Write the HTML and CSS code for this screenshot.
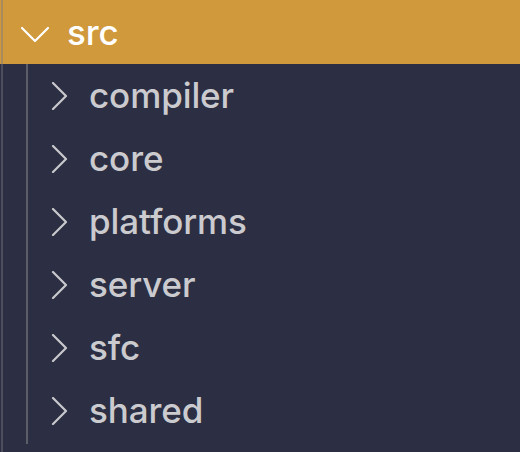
FILE: index.html
```html
<!DOCTYPE html>
<html>
<head>
<meta charset="utf-8">
<link rel="stylesheet" href="styles.css">
</head>
<body>
<div class="tree">
  <div class="folder open">
    <svg class="chev-down" width="30" height="28" viewBox="0 0 30 28"><path d="M2 10 L15 23 L28 10" fill="none" stroke="#ffffff" stroke-width="2.2" stroke-linecap="round" stroke-linejoin="round"/></svg>
    <span class="name">src</span>
  </div>
  <div class="children">
    <div class="folder"><svg class="chev-right" width="20" height="28" viewBox="0 0 20 28"><path d="M2 1 L15 14 L2 27" fill="none" stroke="#c9c9cd" stroke-width="2.2" stroke-linecap="round" stroke-linejoin="round"/></svg><span class="name">compiler</span></div>
    <div class="folder"><svg class="chev-right" width="20" height="28" viewBox="0 0 20 28"><path d="M2 1 L15 14 L2 27" fill="none" stroke="#c9c9cd" stroke-width="2.2" stroke-linecap="round" stroke-linejoin="round"/></svg><span class="name">core</span></div>
    <div class="folder"><svg class="chev-right" width="20" height="28" viewBox="0 0 20 28"><path d="M2 1 L15 14 L2 27" fill="none" stroke="#c9c9cd" stroke-width="2.2" stroke-linecap="round" stroke-linejoin="round"/></svg><span class="name">platforms</span></div>
    <div class="folder"><svg class="chev-right" width="20" height="28" viewBox="0 0 20 28"><path d="M2 1 L15 14 L2 27" fill="none" stroke="#c9c9cd" stroke-width="2.2" stroke-linecap="round" stroke-linejoin="round"/></svg><span class="name">server</span></div>
    <div class="folder"><svg class="chev-right" width="20" height="28" viewBox="0 0 20 28"><path d="M2 1 L15 14 L2 27" fill="none" stroke="#c9c9cd" stroke-width="2.2" stroke-linecap="round" stroke-linejoin="round"/></svg><span class="name">sfc</span></div>
    <div class="folder"><svg class="chev-right" width="20" height="28" viewBox="0 0 20 28"><path d="M2 1 L15 14 L2 27" fill="none" stroke="#c9c9cd" stroke-width="2.2" stroke-linecap="round" stroke-linejoin="round"/></svg><span class="name">shared</span></div>
  </div>
</div>
</body>
</html>
```
FILE: styles.css
```css
html, body {
  margin: 0;
  padding: 0;
  background: #2c2f43;
}
body {
  width: 520px;
  height: 452px;
  overflow: hidden;
  font-family: Inter, "Liberation Sans", sans-serif;
}
.tree {
  position: relative;
  height: 452px;
}
.tree::before {
  content: "";
  position: absolute;
  left: 1px;
  top: 0;
  bottom: 0;
  width: 2px;
  background: rgba(120, 120, 128, 0.45);
}
.folder {
  display: flex;
  align-items: center;
  height: 63px;
}
.folder.open {
  height: 64px;
  background: #cf993c;
  padding-left: 20px;
  gap: 17px;
  color: #ffffff;
}
.folder.open .name {
  font-size: 35px;
}
.children {
  margin-left: 26px;
  border-left: 2px solid #5c5d66;
  padding-bottom: 2px;
}
.children .folder {
  padding-left: 23px;
  gap: 18px;
  color: #cbcbcf;
}
.name {
  font-size: 35px;
  font-weight: 500;
  line-height: 1;
  letter-spacing: -0.1px;
}
.chev-down, .chev-right {
  flex: none;
  display: block;
}
```
